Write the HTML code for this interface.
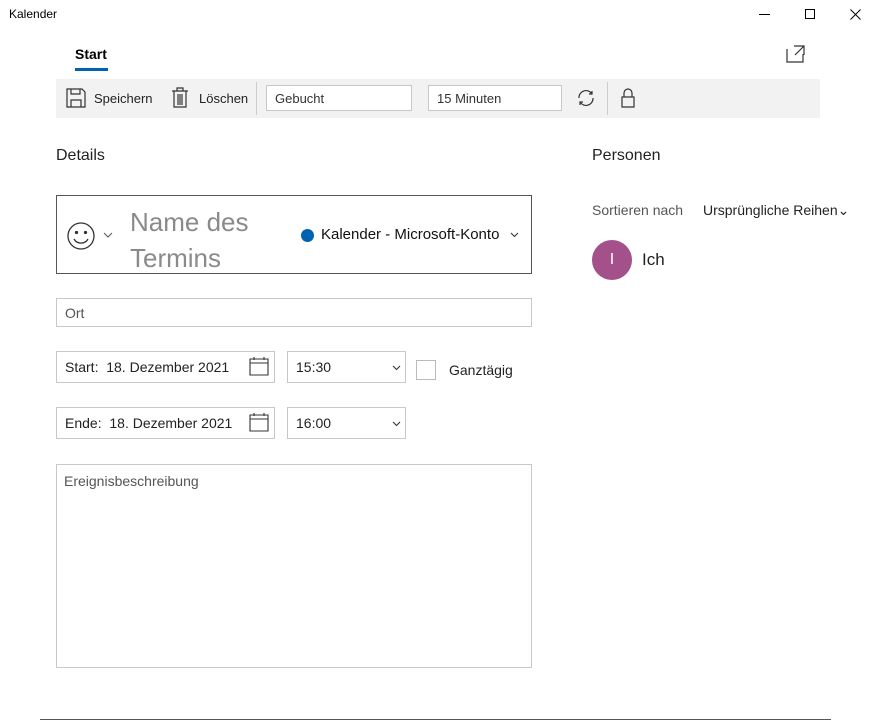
<!DOCTYPE html>
<html><head><style>
*{box-sizing:border-box;margin:0;padding:0}
body{width:879px;height:721px;background:#fff;font-family:"Liberation Sans",sans-serif;color:#000;position:relative;overflow:hidden;font-size:14px}
.a{position:absolute}
.box{position:absolute;border:1px solid #c8c8c8;background:#fff;color:#555;font-size:14px;padding-left:8px;display:flex;align-items:center}
.sel{position:absolute;border:1px solid #c8c8c8;font-size:14px;color:#222;padding-left:8px;display:flex;align-items:center}
</style></head><body>
<div class="a" style="left:9px;top:7px;font-size:12px">Kalender</div>
<div class="a" style="left:759px;top:14px;width:11px;height:1px;background:#000"></div>
<div class="a" style="left:805px;top:9px;width:10px;height:10px;border:1px solid #000"></div>
<svg class="a" style="left:850px;top:9px" width="11" height="11" stroke="#000" stroke-width="1"><path d="M0.5 0.5L10.5 10.5M10.5 0.5L0.5 10.5"/></svg>
<div class="a" style="left:75px;top:46px;font-weight:bold;font-size:14px">Start</div>
<div class="a" style="left:75px;top:68px;width:33px;height:3px;background:#0063b1"></div>
<svg class="a" style="left:786px;top:44px" width="20" height="20" fill="none" stroke="#333" stroke-width="1.2"><path d="M1 5v13h16v-8M8 2h10v9M18 2L9 11"/></svg>
<div class="a" style="left:56px;top:79px;width:764px;height:39px;background:#f2f2f2"></div>
<svg class="a" style="left:66px;top:88px" width="20" height="20" fill="none" stroke="#333" stroke-width="1.2"><path d="M1 1h15l3 3v15H1zM5 19v-7h10v7M5 1v5h9V1"/></svg>
<div class="a" style="left:94px;top:91px;font-size:13px;color:#222">Speichern</div>
<svg class="a" style="left:171px;top:87px" width="18" height="21" fill="none" stroke="#333" stroke-width="1.2"><path d="M1 4h16M6 4V1h6v3M3 4v16h12V4M7 7v11M9 7v11M11 7v11"/></svg>
<div class="a" style="left:199px;top:91px;font-size:13px;color:#222">Löschen</div>
<div class="a" style="left:256px;top:82px;width:1px;height:33px;background:#ccc"></div>
<div class="box" style="left:266px;top:85px;width:146px;height:26px;font-size:13px;color:#333">Gebucht</div>
<div class="box" style="left:428px;top:85px;width:134px;height:26px;font-size:13px;color:#333">15 Minuten</div>
<svg class="a" style="left:576px;top:88px" width="20" height="20" fill="none" stroke="#333" stroke-width="1.2"><path d="M3 10a7 7 0 0 1 13-4M17 10a7 7 0 0 1-13 4M13 6h3V3M7 14H4v3"/></svg>
<div class="a" style="left:607px;top:82px;width:1px;height:33px;background:#ccc"></div>
<svg class="a" style="left:620px;top:87px" width="16" height="21" fill="none" stroke="#333" stroke-width="1.2"><path d="M2 10h12v10H2zM4 10V6a4 4 0 0 1 8 0v4"/></svg>
<div class="a" style="left:56px;top:147px;font-size:16px;color:#222">Details</div>
<div class="a" style="left:592px;top:147px;font-size:16px;color:#222">Personen</div>
<div class="a" style="left:56px;top:195px;width:476px;height:79px;border:1px solid #555"></div>
<svg class="a" style="left:66px;top:221px" width="30" height="30" fill="none" stroke="#333" stroke-width="1.3"><circle cx="15" cy="15" r="13"/><circle cx="10.5" cy="11.5" r="1" fill="#333"/><circle cx="19.5" cy="11.5" r="1" fill="#333"/><path d="M8 18a8 8 0 0 0 14 0"/></svg>
<svg class="a" style="left:103px;top:232px" width="10" height="6" fill="none" stroke="#555" stroke-width="1"><path d="M1 1l4 4 4-4"/></svg>
<div class="a" style="left:130px;top:204px;font-size:26px;color:#8a8a8a;line-height:36px;width:160px">Name des Termins</div>
<div class="a" style="left:301px;top:229px;width:13px;height:13px;border-radius:50%;background:#0063b1"></div>
<div class="a" style="left:321px;top:226px;font-size:15px;color:#111">Kalender - Microsoft-Konto</div>
<svg class="a" style="left:510px;top:232px" width="9" height="6" fill="none" stroke="#333" stroke-width="1.1"><path d="M1 1l3.5 3.5L8 1"/></svg>
<div class="box" style="left:56px;top:298px;width:476px;height:29px">Ort</div>
<div class="box" style="left:56px;top:351px;width:219px;height:32px;color:#222">Start:&nbsp; 18. Dezember 2021</div>
<div class="box" style="left:56px;top:407px;width:219px;height:32px;color:#222">Ende:&nbsp; 18. Dezember 2021</div>
<svg class="a" style="left:249px;top:356px" width="20" height="20" fill="none" stroke="#333" stroke-width="1.1"><path d="M1 3h18v16H1zM1 7h18M5 1v3M15 1v3"/></svg>
<svg class="a" style="left:249px;top:412px" width="20" height="20" fill="none" stroke="#333" stroke-width="1.1"><path d="M1 3h18v16H1zM1 7h18M5 1v3M15 1v3"/></svg>
<div class="sel" style="left:287px;top:351px;width:119px;height:32px">15:30<svg style="position:absolute;right:4px;top:13px" width="9" height="6" fill="none" stroke="#333" stroke-width="1.1"><path d="M1 1l3.5 3.5L8 1"/></svg></div>
<div class="sel" style="left:287px;top:407px;width:119px;height:32px">16:00<svg style="position:absolute;right:4px;top:13px" width="9" height="6" fill="none" stroke="#333" stroke-width="1.1"><path d="M1 1l3.5 3.5L8 1"/></svg></div>
<div class="a" style="left:416px;top:360px;width:20px;height:20px;border:1px solid #bbb"></div>
<div class="a" style="left:449px;top:362px;font-size:14px;color:#222">Ganztägig</div>
<div class="box" style="left:56px;top:464px;width:476px;height:204px;align-items:flex-start;padding-top:8px;padding-left:7px">Ereignisbeschreibung</div>
<div class="a" style="left:592px;top:202px;font-size:14px;color:#555">Sortieren nach</div>
<div class="a" style="left:703px;top:202px;font-size:14px;color:#222">Ursprüngliche Reihen⌄</div>
<div class="a" style="left:592px;top:240px;width:40px;height:40px;border-radius:50%;background:#a4508b;color:#fff;font-size:16px;display:flex;align-items:center;justify-content:center">I</div>
<div class="a" style="left:642px;top:250px;font-size:17px;color:#222">Ich</div>
<div class="a" style="left:40px;top:719px;width:791px;height:1px;background:#555"></div>
</body></html>
